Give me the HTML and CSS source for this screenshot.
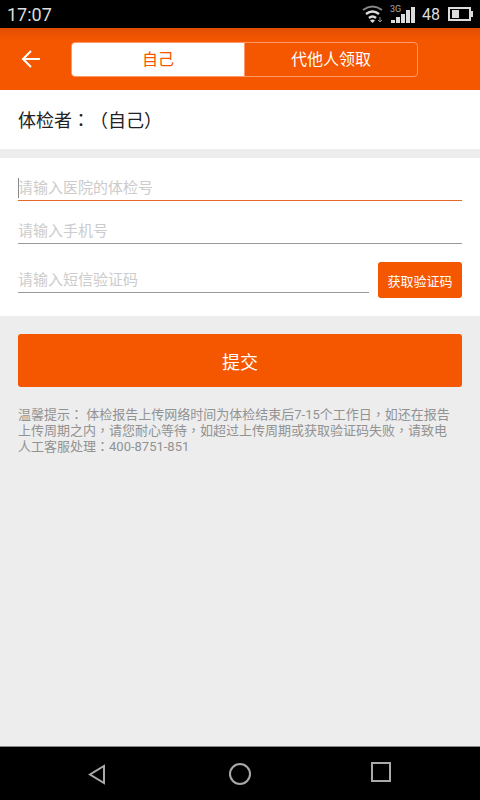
FILE: index.html
```html
<!DOCTYPE html>
<html lang="zh-CN">
<head>
<meta charset="utf-8">
<meta name="viewport" content="width=device-width, initial-scale=1">
<title>体检报告领取</title>
<link rel="stylesheet" href="styles.css">
</head>
<body>
<div class="status">
  <time class="clock">17:07</time>
  <div class="indicators">
    <svg class="wifi" width="22" height="20" viewBox="0 0 22 20" fill="none" stroke="#ddd" stroke-width="2">
      <path d="M2 6Q11.500 -1 21 6" stroke="#888"/>
      <path d="M5 10Q11.500 5 18 10" stroke-width="2.500"/>
      <path d="M8 14Q11.500 11 15 14" stroke-width="2.500"/>
      <path d="M9 16.500Q11.500 14.500 14 16.500L11.500 19Z" fill="#ddd" stroke="none"/>
      <path d="M19 13V18M17 16L19 18L21 16" stroke="#999" stroke-width="1"/>
    </svg>
    <div class="signal">
      <span class="network">3G</span>
      <svg width="26" height="20" viewBox="0 0 26 20" fill="#ddd">
        <path d="M2 16h4v3H2zM7 13h4v6H7zM12 10h4v9h-4zM17 6h4v13h-4zM22 3h4v16h-4z"/>
      </svg>
    </div>
    <span class="level">48</span>
    <svg class="battery" width="25" height="16" viewBox="0 0 25 16">
      <path d="M1 2H22V14H1Z" fill="none" stroke="#ddd" stroke-width="2"/>
      <path d="M4 4h7v8H4zM22 5h3v6h-3z" fill="#ddd"/>
    </svg>
  </div>
</div>

<header class="header">
  <button class="back" type="button" aria-label="返回">
    <svg width="20" height="18" viewBox="0 0 20 18" fill="none" stroke="#fff" stroke-width="2">
      <path d="M10 1L2 9L10 17M2 9H19"/>
    </svg>
  </button>
  <div class="tabs">
    <button class="tab tab-active" type="button">自己</button>
    <button class="tab" type="button">代他人领取</button>
  </div>
</header>

<main class="main">
  <h1 class="person">体检者<span class="punct" lang="zh-TW">：</span>（自己）</h1>
  <form class="form">
    <div class="fields">
      <div class="field focused">
        <input class="input" type="text" placeholder="请输入医院的体检号" aria-label="体检号">
      </div>
      <div class="field">
        <input class="input" type="tel" placeholder="请输入手机号" aria-label="手机号">
      </div>
      <div class="code-row">
        <div class="field">
          <input class="input" type="text" placeholder="请输入短信验证码" aria-label="短信验证码">
        </div>
        <button class="code" type="button">获取验证码</button>
      </div>
    </div>
    <button class="submit" type="submit">提交</button>
  </form>
  <p class="tip">温馨提示<span class="punct" lang="zh-TW">：</span> 体检报告上传网络时间为体检结束后7-15个工作日<span class="punct" lang="zh-TW">，</span>如还在报告<br>上传周期之内<span class="punct" lang="zh-TW">，</span>请您耐心等待<span class="punct" lang="zh-TW">，</span>如超过上传周期或获取验证码失败<span class="punct" lang="zh-TW">，</span>请致电<br>人工客服处理<span class="punct" lang="zh-TW">：</span>400-8751-851</p>
</main>

<nav class="navbar">
  <button class="key" type="button" aria-label="返回键">
    <svg width="24" height="24" viewBox="0 0 24 24" fill="none" stroke="#aaa" stroke-width="2"><path d="M17 4V21L3 12.500Z"/></svg>
  </button>
  <button class="key" type="button" aria-label="主屏幕">
    <svg width="24" height="24" viewBox="0 0 24 24" fill="none" stroke="#aaa" stroke-width="2"><circle cx="12" cy="12" r="10"/></svg>
  </button>
  <button class="key" type="button" aria-label="最近任务">
    <svg width="24" height="24" viewBox="0 0 24 24" fill="none" stroke="#aaa" stroke-width="2"><path d="M3 1H21V19H3Z"/></svg>
  </button>
</nav>
</body>
</html>
```
FILE: styles.css
```css
* {
  box-sizing: border-box;
}

body {
  display: flex;
  flex-direction: column;
  min-height: 100vh;
  margin: 0;
  background: #ededed;
  font-family: Roboto, "Noto Sans CJK SC", sans-serif;
  text-spacing-trim: space-all;
}

button,
input {
  margin: 0;
  padding: 0;
  border: 0;
  font-family: inherit;
}

svg {
  display: block;
}

.punct {
  font-family: Roboto, "Noto Sans CJK TC", sans-serif;
}

.status {
  display: flex;
  align-items: center;
  justify-content: space-between;
  height: 28px;
  padding: 0 7px;
  background: #000;
  color: #ddd;
}

.clock {
  font-size: 18px;
}

.indicators {
  display: flex;
  align-items: center;
}

.signal {
  position: relative;
  margin: 0 7px 0 6px;
}

.network {
  position: absolute;
  top: 0;
  left: 1px;
  color: #aaa;
  font-size: 9px;
  line-height: 10px;
}

.level {
  margin-right: 8px;
  font-size: 16px;
}

.header {
  display: flex;
  align-items: center;
  height: 62px;
  padding: 0 62px 0 18px;
  background: linear-gradient(#e04e02, #f55600 12px);
}

.back {
  display: flex;
  align-items: center;
  width: 53px;
  height: 48px;
  padding-left: 3px;
  background: none;
}

.tabs {
  display: flex;
  flex: 1;
  height: 35px;
  border: 1px solid #ff9a66;
  border-radius: 4px;
  overflow: hidden;
}

.tab {
  flex: 1;
  padding-bottom: 2px;
  border-left: 1px solid #ff9a66;
  background: none;
  color: #fff;
  font-size: 16px;
}

.tab-active {
  border-left: 0;
  background: #fff;
  color: #f55600;
}

.main {
  flex: 1;
}

.person {
  margin: 0 0 9px;
  padding: 2px 18px 0;
  background: #fff;
  color: #222;
  font-size: 18px;
  font-weight: 400;
  line-height: 57px;
}

.fields {
  padding: 14px 18px 18px;
  background: #fff;
}

.field {
  flex: 1;
  margin-bottom: 14px;
  border-bottom: 1px solid #999;
}

.focused {
  border-color: #e8682a;
}

.input {
  display: block;
  width: 100%;
  height: 28px;
  padding-top: 3px;
  background: none;
  color: #222;
  font-size: 15px;
  outline: 0;
}

.focused .input {
  background: linear-gradient(#888, #888) 0 6px / 1px 20px no-repeat;
}

.input::placeholder {
  color: #ccc;
  opacity: 1;
}

.code-row {
  display: flex;
  align-items: flex-end;
  gap: 9px;
  padding-top: 4px;
}

.code-row .field {
  margin-bottom: 5px;
}

.code {
  width: 84px;
  height: 36px;
  border-radius: 3px;
  background: #f55600;
  color: #fff;
  font-size: 13px;
}

.submit {
  display: block;
  width: calc(100% - 36px);
  height: 53px;
  margin: 18px;
  border-radius: 3px;
  background: #f55600;
  color: #fff;
  font-size: 18px;
}

.tip {
  margin: 0 18px;
  padding-top: 2px;
  color: #929292;
  font-size: 13px;
  line-height: 16px;
  white-space: nowrap;
}

.navbar {
  display: flex;
  align-items: center;
  justify-content: space-around;
  height: 54px;
  padding: 0 28px;
  border-top: 1px solid #888;
  background: #000;
}

.key {
  background: none;
}
```
